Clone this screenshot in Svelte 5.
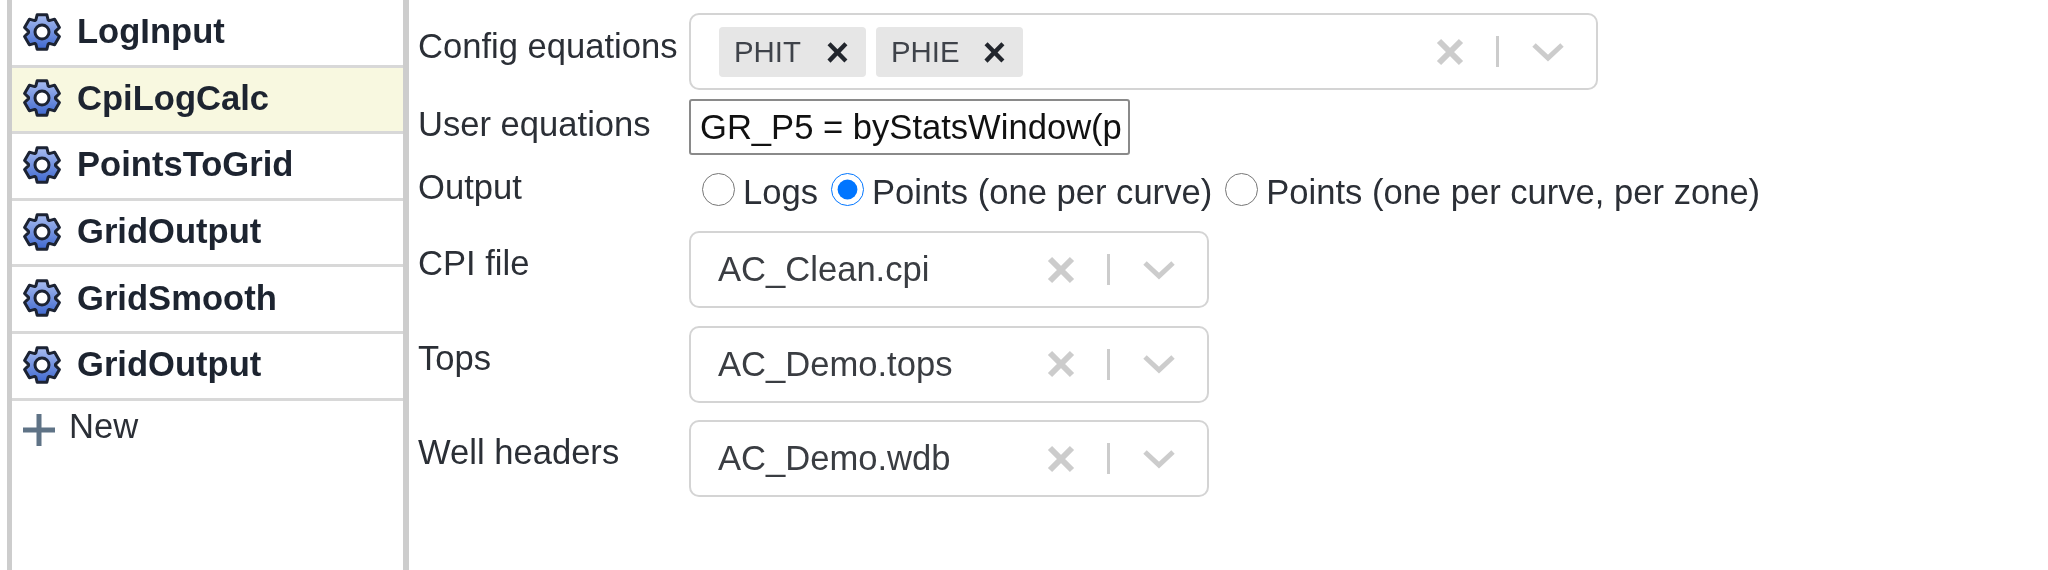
<script>
  const steps = [
    { name: "LogInput" },
    { name: "CpiLogCalc", active: true },
    { name: "PointsToGrid" },
    { name: "GridOutput" },
    { name: "GridSmooth" },
    { name: "GridOutput" }
  ];

  const outputs = [
    { label: "Logs", checked: false },
    { label: "Points (one per curve)", checked: true },
    { label: "Points (one per curve, per zone)", checked: false }
  ];

  const files = [
    { label: "CPI file", value: "AC_Clean.cpi" },
    { label: "Tops", value: "AC_Demo.tops" },
    { label: "Well headers", value: "AC_Demo.wdb" }
  ];

  // six teeth, outline built from polar points
  function gearPath() {
    const points = [];
    for (let i = 0; i < 6; i++) {
      const a = (i * Math.PI) / 3 - Math.PI / 2;
      const p = (r, d) => {
        const x = 20 + r * Math.cos(a + d);
        const y = 20 + r * Math.sin(a + d);
        return x.toFixed(2) + " " + y.toFixed(2);
      };
      points.push(p(13.5, -0.48), p(18, -0.27), p(18, 0.27), p(13.5, 0.48));
    }
    return "M" + points.join("L") + "Z";
  }
  const gear = gearPath();
</script>

{#snippet controls()}
  <span class="controls">
    <svg class="clear" viewBox="0 0 28 28" width="28" height="28">
      <path d="M3 3L25 25M25 3L3 25" />
    </svg>
    <span class="sep"></span>
    <svg class="chevron" viewBox="0 0 34 20" width="34" height="20">
      <path d="M3 3L17 16L31 3" />
    </svg>
  </span>
{/snippet}

<div class="page">
  <aside class="sidebar">
    {#each steps as step}
      <div class="step" class:active={step.active}>
        <svg class="gear" viewBox="0 0 40 40" width="40" height="40">
          <defs>
            <linearGradient id="gearFill" x1="0" y1="0" x2="0" y2="1">
              <stop offset="0" stop-color="#a9bdf0" />
              <stop offset="1" stop-color="#3f68cf" />
            </linearGradient>
          </defs>
          <path d={gear} fill="url(#gearFill)" stroke="#1c2333" stroke-width="3" stroke-linejoin="round" />
          <circle cx="20" cy="20" r="7" fill="#fff" stroke="#1c2333" stroke-width="3" />
        </svg>
        <span>{step.name}</span>
      </div>
    {/each}
    <div class="new">
      <svg viewBox="0 0 32 32" width="32" height="32">
        <path d="M16 0V32M0 16H32" />
      </svg>
      <span>New</span>
    </div>
  </aside>

  <main class="form">
    <div class="row row-config">
      <label for="cfg">Config equations</label>
      <div class="select wide" id="cfg">
        <div class="tags">
          <span class="tag">PHIT<b>×</b></span>
          <span class="tag">PHIE<b>×</b></span>
        </div>
        {@render controls()}
      </div>
    </div>

    <div class="row row-user">
      <label for="eq">User equations</label>
      <input id="eq" type="text" value="GR_P5 = byStatsWindow(p" />
    </div>

    <div class="row row-output">
      <span class="label">Output</span>
      <div class="radios">
        {#each outputs as o}
          <label class="radio">
            <input type="radio" name="output" checked={o.checked} />
            <span>{o.label}</span>
          </label>
        {/each}
      </div>
    </div>

    {#each files as f}
      <div class="row row-file">
        <span class="label">{f.label}</span>
        <div class="select">
          <span class="value">{f.value}</span>
          {@render controls()}
        </div>
      </div>
    {/each}
  </main>
</div>

<style>
  :global(body) {
    background: #fff;
    overflow: hidden;
  }

  .page {
    display: flex;
    height: 570px;
    padding-left: 7px;
    font-family: "Liberation Sans", Arial, sans-serif;
    font-size: 34.6px;
    color: #2b2f36;
    filter: blur(0.5px);
  }

  .sidebar {
    width: 391px;
    flex: none;
    border-left: 5px solid #cdcdcd;
    border-right: 6px solid #cdcdcd;
  }

  .step {
    display: flex;
    align-items: center;
    gap: 15px;
    height: 61.6px;
    padding: 0 0 2px 10px;
    border-bottom: 3px solid #d8d8d8;
    font-weight: bold;
    color: #1d2430;
  }

  .step:first-child {
    padding-top: 1px;
  }

  .step.active {
    background: #f8f8e0;
  }

  .gear {
    flex: none;
  }

  .new {
    display: flex;
    align-items: flex-start;
    gap: 14px;
    padding: 6px 0 0 11px;
  }

  .new svg {
    margin-top: 7px;
  }

  .new path {
    fill: none;
    stroke: #5f7386;
    stroke-width: 5;
  }

  .form {
    flex: 1;
    padding: 13px 0 0 9px;
  }

  .row {
    display: flex;
    align-items: flex-start;
  }

  .row > label,
  .label {
    width: 271px;
    flex: none;
    line-height: 40px;
  }

  .row-config {
    height: 86px;
  }

  .row-config > label {
    margin-top: 13px;
  }

  .row-user {
    height: 70px;
  }

  .row-user > label {
    margin-top: 5px;
  }

  .row-user input {
    width: 441px;
    height: 56px;
    box-sizing: border-box;
    padding: 0 1px 0 9px;
    border: 2px solid #8a8a8a;
    border-radius: 3px;
    font: inherit;
    color: #111;
    outline: none;
  }

  .row-output {
    height: 62px;
  }

  .row-output .label {
    margin-top: -2px;
  }

  .radios {
    display: flex;
    padding-left: 13px;
    gap: 13px;
  }

  .radio {
    display: flex;
    align-items: flex-start;
    gap: 8px;
    line-height: 40px;
    padding-top: 3px;
  }

  .radio input {
    width: 33px;
    height: 33px;
    margin: 1px 0 0;
    accent-color: #0075ff;
  }

  .row-file {
    height: 94.5px;
  }

  .row-file .label {
    margin-top: 12px;
  }

  .select {
    width: 520px;
    height: 77px;
    box-sizing: border-box;
    display: flex;
    align-items: center;
    justify-content: space-between;
    padding: 0 31px 0 27px;
    border: 2px solid #d4d4d4;
    border-radius: 10px;
    color: #3a3d42;
  }

  .select.wide {
    width: 909px;
    padding-left: 28px;
  }

  .tags {
    display: flex;
    gap: 10px;
  }

  .tag {
    display: flex;
    align-items: center;
    justify-content: space-between;
    width: 147px;
    height: 50px;
    box-sizing: border-box;
    padding: 0 17px 0 15px;
    background: #e6e6e6;
    border-radius: 4px;
    font-size: 29.4px;
    color: #3f434a;
  }

  .tag b {
    font-size: 40px;
    line-height: 1;
    color: #22262d;
  }

  .controls {
    display: flex;
    align-items: center;
    gap: 32px;
  }

  .controls svg {
    flex: none;
  }

  .controls path {
    fill: none;
    stroke: #cccccc;
  }

  .clear path {
    stroke-width: 6;
  }

  .chevron path {
    stroke-width: 5;
  }

  .sep {
    width: 3px;
    height: 31px;
    background: #cccccc;
  }
</style>
